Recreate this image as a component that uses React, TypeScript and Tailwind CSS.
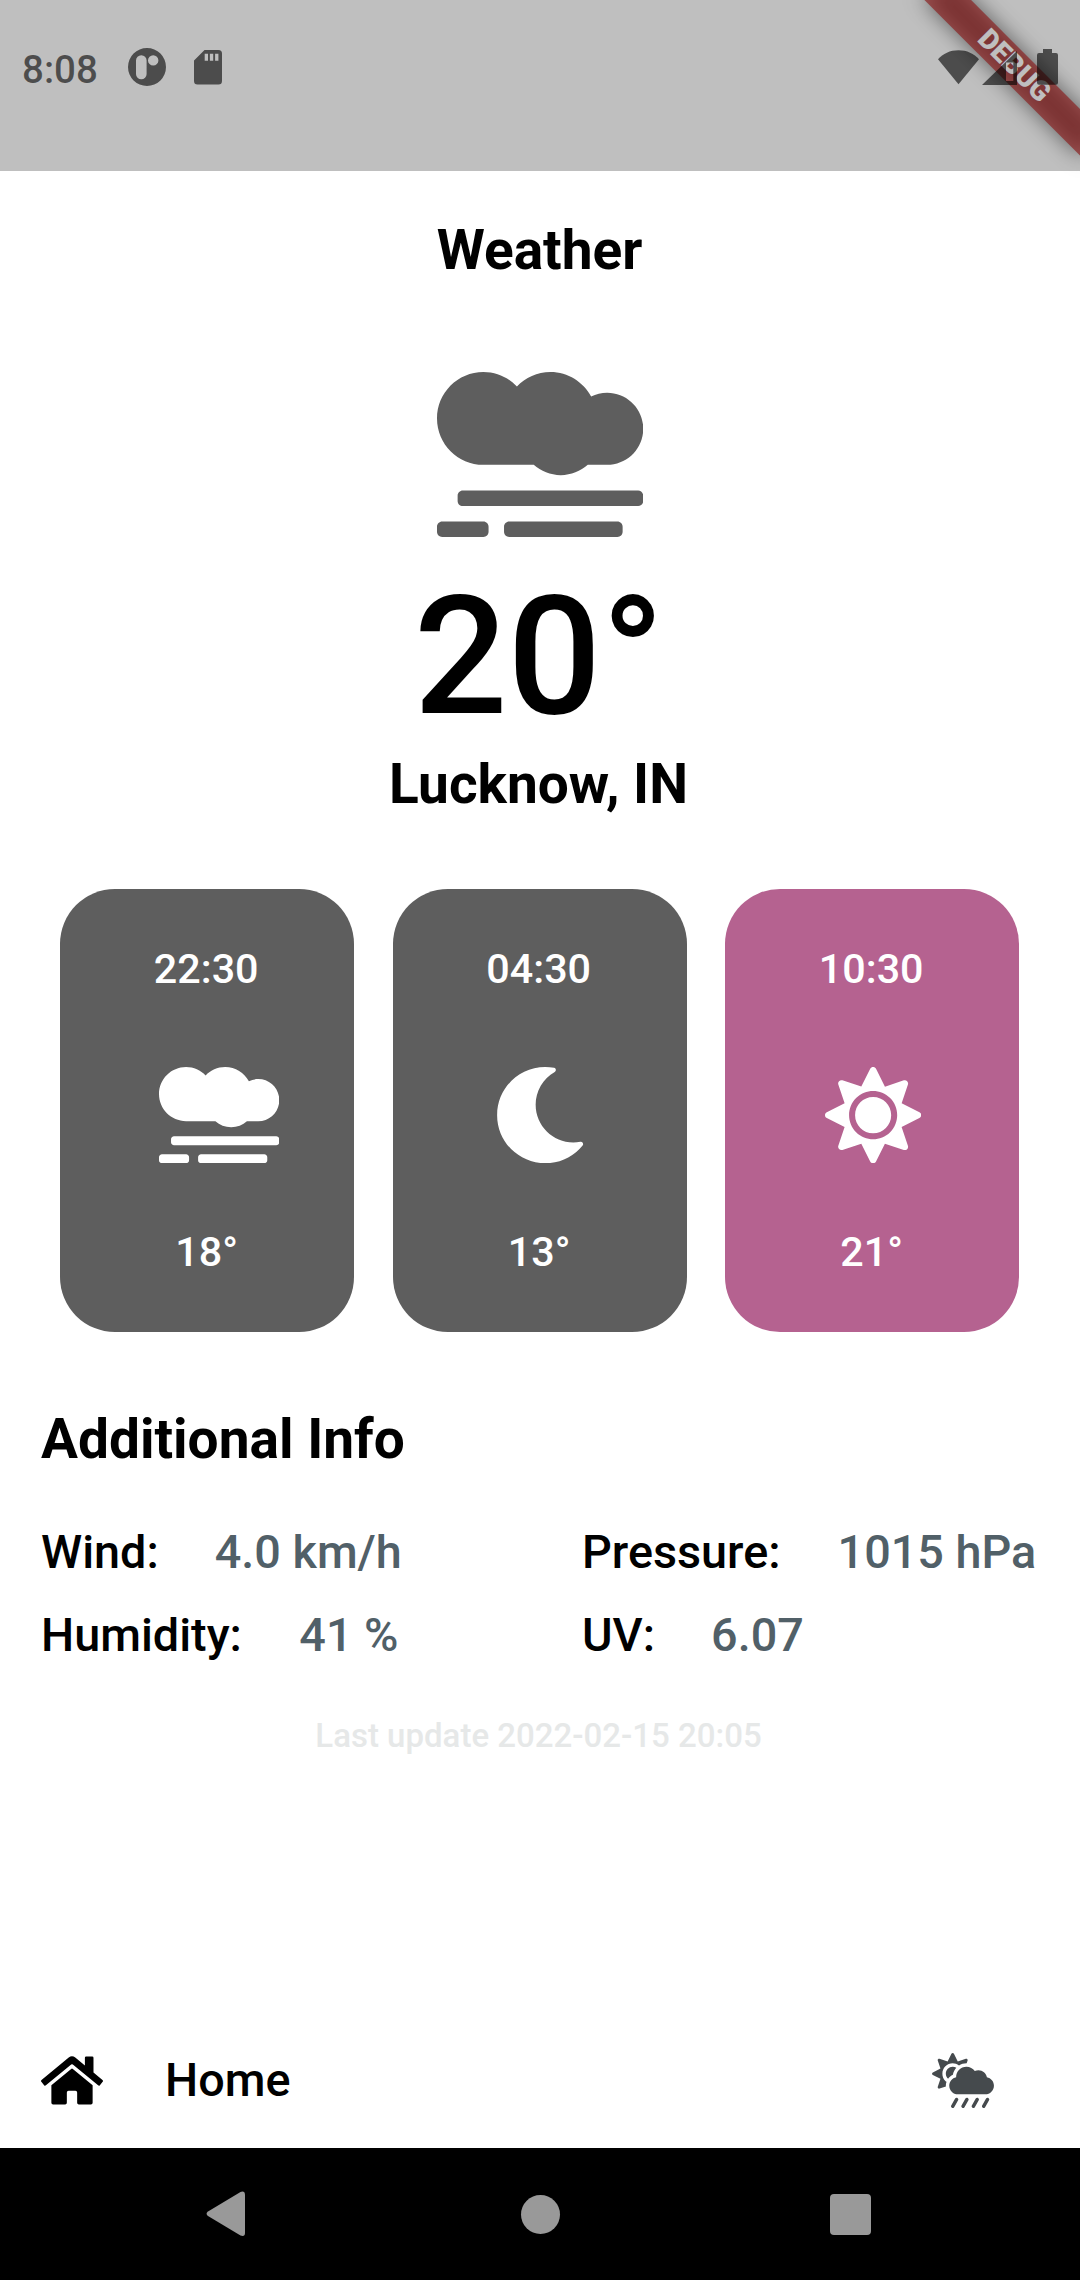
import React from "react";
import { FaSmog, FaMoon, FaSun, FaHome, FaCloudSunRain } from "react-icons/fa";

function DebugBanner() {
  return (
    <div className="absolute top-0 right-0 h-[280px] w-[280px] overflow-hidden">
      <div className="absolute top-0 left-[280px] h-0 w-0 origin-top-left rotate-45">
        <div className="absolute top-[77px] left-[-110px] h-[33px] w-[220px] bg-black/50 blur-[10.5px]" />
        <div className="absolute top-[77px] left-[-110px] flex h-[33px] w-[220px] items-center justify-center bg-[#b71c1c]/[0.627] pb-[2px] text-[28.05px] leading-[28px] font-black text-white">
          DEBUG
        </div>
      </div>
    </div>
  );
}

function StatusBar() {
  return (
    <header className="relative flex h-[171px] shrink-0 items-start bg-black/25 pl-[22px] text-black/60">
      <span className="mt-[47px] w-[106px] text-[38.5px] leading-[45px] font-medium">8:08</span>
      <svg className="mt-[48px] h-[38px] w-[38px]" viewBox="0 0 38 38" fill="currentColor">
        <path
          fillRule="evenodd"
          d="M19 0a19 19 0 1 1 0 38a19 19 0 1 1 0-38zM13.3 7.2a5.3 5.3 0 0 0-5.3 5.3v13.500a5.300 5.300 0 0 0 10.600 0v-13.500a5.300 5.300 0 0 0-5.300-5.300zM25.200 7.200a5.200 5.200 0 1 0 0 10.400a5.200 5.200 0 1 0 0-10.400z"
        />
      </svg>
      <svg className="mt-[50px] ml-[28px] h-[35px] w-[28px]" viewBox="0 0 28 35" fill="currentColor">
        <path
          fillRule="evenodd"
          d="M10.500 0h14a3.500 3.500 0 0 1 3.500 3.500v27.500a3.500 3.500 0 0 1-3.500 3.500h-21a3.500 3.500 0 0 1-3.500-3.500v-20.500zM10.700 3.700v7h3.300v-7zM15.900 3.700v7h3.300v-7zM21.100 3.700v7h3.300v-7z"
        />
      </svg>
      <svg className="mt-[48px] mr-[21px] ml-auto h-[38px] w-[121px]" viewBox="938 48 121 38" fill="currentColor">
        <path d="M958.500 84.300L938 59.300C943 53.500 950 50.200 958.500 50.200S974 53.500 979 59.300z" />
        <path fillRule="evenodd" d="M982 85L1017 51V85zM1006 62.500V81H1013.300V62.500z" />
        <path d="M1043 49h9v4h4a2 2 0 0 1 2 2v27.800a2 2 0 0 1-2 2h-17a2 2 0 0 1-2-2v-27.800a2 2 0 0 1 2-2h4z" />
      </svg>
    </header>
  );
}

type HourCardProps = { time: string; temp: string; active?: boolean; children: React.ReactNode };

function HourCard({ time, temp, active, children }: HourCardProps) {
  return (
    <div
      className={`flex h-[443px] w-[294px] flex-col items-center rounded-[55px] pt-[56px] text-white ${
        active ? "bg-[#b56290]" : "bg-[#5e5e5e]"
      }`}
    >
      <span className="pr-[2px] text-[41.25px] leading-[48px] font-medium">{time}</span>
      <div className="mt-[74px] flex h-[97px] w-[96.25px] justify-start">{children}</div>
      <span className="mt-[64px] pr-px text-[41.25px] leading-[48px] font-medium">{temp}</span>
    </div>
  );
}

function Info({ label, value, gap }: { label: string; value: string; gap: string }) {
  return (
    <div className="flex leading-[55px]">
      <span>{label}</span>
      <span className={`${gap} text-[#516068]`}>{value}</span>
    </div>
  );
}

export default function App() {
  return (
    <div className="relative flex h-[2280px] w-[1080px] flex-col overflow-hidden bg-white font-['Roboto',sans-serif] text-black">
      <DebugBanner />
      <StatusBar />
      <main className="flex flex-1 flex-col">
        <h1 className="mt-[47px] pr-px text-center text-[55px] leading-[65px] font-bold">Weather</h1>
        <FaSmog className="mt-[89px] mb-px h-[165px] w-[206.25px] self-center text-[#5e5e5e]" />
        <div className="mt-[22px] pr-[2px] text-center text-[165px] leading-[194px] font-medium">20°</div>
        <div className="mt-[-2px] pr-[3px] text-center text-[55px] leading-[65px] font-bold">Lucknow, IN</div>
        <div className="mt-[72px] ml-[60.200px] flex gap-[38.500px]">
          <HourCard time="22:30" temp="18°">
            <FaSmog className="h-[96.25px] w-[120.3px] shrink-0" />
          </HourCard>
          <HourCard time="04:30" temp="13°">
            <FaMoon className="ml-[0.5px] h-[96.25px] w-[96.25px] shrink-0" />
          </HourCard>
          <HourCard time="10:30" temp="21°" active>
            <FaSun className="ml-[0.5px] h-[96.25px] w-[96.25px] shrink-0" />
          </HourCard>
        </div>
        <h2 className="mt-[75px] ml-[41px] text-[55px] leading-[65px] font-bold">Additional Info</h2>
        <div className="mt-[53px] ml-[41px] grid grid-cols-[541px_1fr] gap-y-[28px] text-[46.75px] font-medium">
          <Info label="Wind:" value="4.0 km/h" gap="ml-[56px]" />
          <Info label="Pressure:" value="1015 hPa" gap="ml-[57px]" />
          <Info label="Humidity:" value="41 %" gap="ml-[57.5px]" />
          <Info label="UV:" value="6.07" gap="ml-[56px]" />
        </div>
        <div className="mt-[53px] pr-[3px] text-center text-[33px] leading-[39px] font-medium text-[#e6e8e8]">
          Last update 2022-02-15 20:05
        </div>
        <nav className="mt-auto mb-[40px] flex h-[55px] items-center pl-[41px] pr-[86px]">
          <FaHome className="h-[55px] w-[62px]" />
          <span className="ml-[62px] text-[46.75px] leading-[55px] font-medium">Home</span>
          <FaCloudSunRain className="ml-auto h-[55px] w-[62px] text-[#454a4d]" />
        </nav>
      </main>
      <footer className="flex h-[132px] shrink-0 items-center bg-black text-[#999999]">
        <svg className="ml-[206px] h-[46px] w-[40px]" viewBox="0 0 40 46" fill="currentColor">
          <path d="M2 20.500L34.500.900Q39 -.5 39 4V42Q39 46 34.500 44.500L2 25Q-.8 22.700 2 20.500z" />
        </svg>
        <div className="ml-[275px] h-[39px] w-[39px] rounded-full bg-current" />
        <div className="ml-[270px] h-[41px] w-[41px] rounded-[4px] bg-current" />
      </footer>
    </div>
  );
}
